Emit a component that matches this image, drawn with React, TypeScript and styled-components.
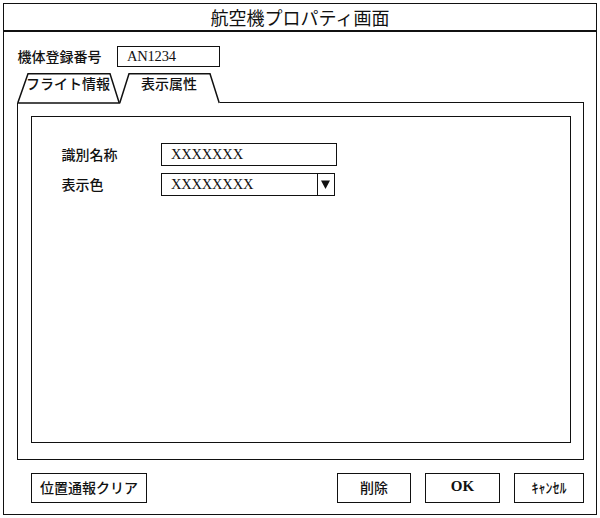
import styled, { createGlobalStyle } from 'styled-components';

const GlobalStyle = createGlobalStyle`
  * {
    box-sizing: border-box;
  }
  body {
    margin: 0;
    background: #fff;
    color: #111;
    font-family: 'Noto Sans CJK JP', 'Noto Sans', sans-serif;
    font-weight: 500;
  }
`;

const Window = styled.div`
  display: flex;
  flex-direction: column;
  width: 594px;
  height: 512px;
  margin: 3px;
  border: 1.5px solid #111;
`;

const TitleBar = styled.div`
  display: flex;
  align-items: center;
  justify-content: center;
  height: 28px;
  border-bottom: 2px solid #111;
  font-size: 18px;
  font-weight: 400;
  line-height: 1;
`;

const Body = styled.div`
  display: flex;
  flex-direction: column;
  flex: 1;
  padding: 0 12px 0 12.5px;
`;

const RegRow = styled.div`
  display: flex;
  align-items: center;
  gap: 15px;
  margin-top: 14px;
  padding-left: 1px;
`;

const Label = styled.span`
  font-size: 14px;
  line-height: 1;
  white-space: nowrap;
  padding-bottom: 2px;
`;

const Field = styled.div<{ $width: number; $height: number }>`
  display: flex;
  align-items: stretch;
  width: ${(p) => p.$width}px;
  height: ${(p) => p.$height}px;
  border: 1.5px solid #111;
  font-family: 'Liberation Serif', 'Noto Sans CJK JP', serif;
  font-weight: 400;
  font-size: 14.5px;
`;

const FieldText = styled.span`
  display: flex;
  align-items: center;
  flex: 1;
  padding-left: 9.5px;
  letter-spacing: -0.2px;
`;

const ArrowCell = styled.span`
  display: flex;
  align-items: center;
  justify-content: center;
  width: 17px;
  border-left: 1.5px solid #111;
`;

const TabRow = styled.div`
  display: flex;
  align-items: stretch;
  height: 30px;
  margin-top: 6px;
`;

const Tab = styled.div<{ $width: number; $active?: boolean }>`
  position: relative;
  display: flex;
  justify-content: center;
  width: ${(p) => p.$width}px;
  margin-left: ${(p) => (p.$active ? '-1px' : '0')};
  padding-top: 1px;
  font-size: 14px;
  line-height: 18px;

  span {
    position: relative;
  }
`;

const TabOutline = styled.svg`
  position: absolute;
  inset: 0;
  width: 100%;
  height: 100%;
  overflow: visible;
`;

const TabFill = styled.div`
  flex: 1;
  border-bottom: 1.5px solid #111;
`;

const Panel = styled.div`
  display: flex;
  flex: 1;
  padding: 13px 12.5px 16px 13.5px;
  border: 1.5px solid #111;
  border-top: none;
`;

const InnerBox = styled.div`
  flex: 1;
  padding: 26px 0 0 29.5px;
  border: 1.5px solid #111;
`;

const FormGrid = styled.div`
  display: grid;
  grid-template-columns: 99px auto;
  row-gap: 7px;
  align-items: center;
  justify-content: start;
`;

const ButtonRow = styled.div`
  display: flex;
  align-items: center;
  gap: 14px;
  height: 30px;
  margin: 13px 0 11px 14.5px;
`;

const Spacer = styled.div`
  flex: 1;
`;

const Button = styled.div<{ $width: number; $latin?: boolean }>`
  display: flex;
  align-items: center;
  justify-content: center;
  width: ${(p) => p.$width}px;
  height: 30px;
  border: 1.5px solid #111;
  font-family: ${(p) =>
    p.$latin ? "'Liberation Serif', serif" : "'Noto Sans CJK JP', sans-serif"};
  font-weight: ${(p) => (p.$latin ? 700 : 500)};
  font-size: ${(p) => (p.$latin ? 15 : 14)}px;
  line-height: 1;
  padding-bottom: 3px;
`;

const TabShape = ({ width, closed }: { width: number; closed: boolean }) => (
  <TabOutline viewBox={`0 0 ${width} 30`} preserveAspectRatio="none">
    <polyline
      points={
        closed
          ? `0.75,30 11,0.75 ${width - 10},0.75 ${width - 0.75},30 0.75,30`
          : `0.75,30 10,0.75 ${width - 10},0.75 ${width - 0.75},30`
      }
      fill="none"
      stroke="#111"
      strokeWidth="1.5"
      strokeLinejoin="miter"
    />
  </TabOutline>
);

const App = () => {
  return (
    <>
      <GlobalStyle />
      <Window>
        <TitleBar>航空機プロパティ画面</TitleBar>
        <Body>
          <RegRow>
            <Label>機体登録番号</Label>
            <Field $width={103} $height={21}>
              <FieldText>AN1234</FieldText>
            </Field>
          </RegRow>

          <TabRow>
            <Tab $width={103}>
              <TabShape width={103} closed />
              <span>フライト情報</span>
            </Tab>
            <Tab $width={101} $active>
              <TabShape width={101} closed={false} />
              <span>表示属性</span>
            </Tab>
            <TabFill />
          </TabRow>

          <Panel>
            <InnerBox>
              <FormGrid>
                <Label>識別名称</Label>
                <Field $width={176} $height={23}>
                  <FieldText>XXXXXXX</FieldText>
                </Field>
                <Label>表示色</Label>
                <Field $width={174} $height={23}>
                  <FieldText>XXXXXXXX</FieldText>
                  <ArrowCell>
                    <svg width="9" height="9" viewBox="0 0 9 9">
                      <polygon points="0,0.5 9,0.5 4.5,9" fill="#111" />
                    </svg>
                  </ArrowCell>
                </Field>
              </FormGrid>
            </InnerBox>
          </Panel>

          <ButtonRow>
            <Button $width={116}>位置通報クリア</Button>
            <Spacer />
            <Button $width={74}>削除</Button>
            <Button $width={75} $latin>
              OK
            </Button>
            <Button $width={70}>ｷｬﾝｾﾙ</Button>
          </ButtonRow>
        </Body>
      </Window>
    </>
  );
};

export default App;
